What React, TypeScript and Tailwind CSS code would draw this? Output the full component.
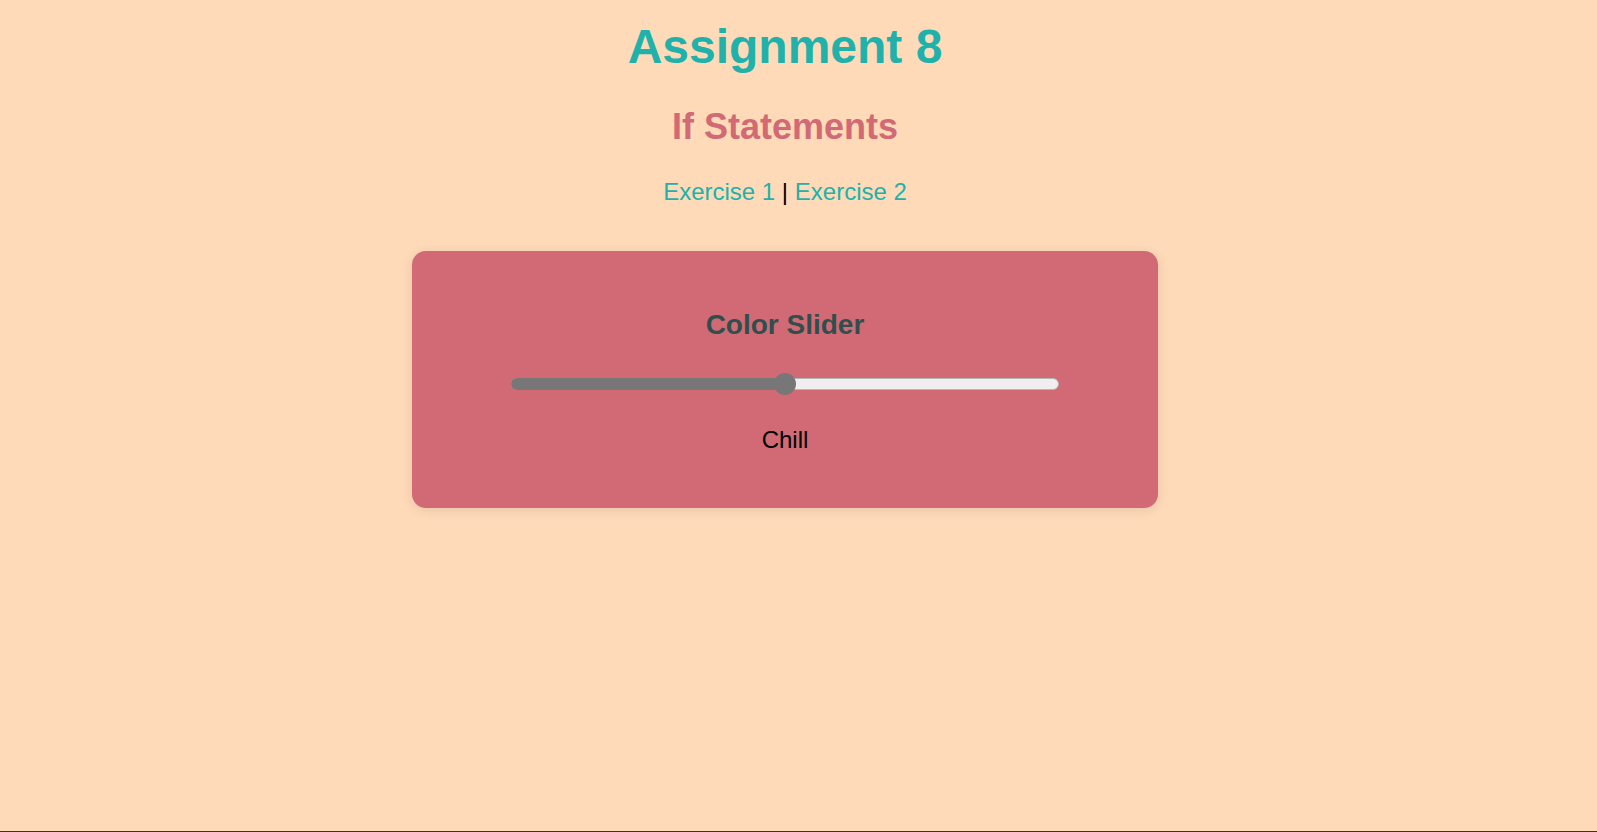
export default function App() {
  const value = 50;

  return (
    <div className="h-screen w-full bg-[#ffdab9] border-b border-[#333] font-['Liberation_Sans',Arial,sans-serif] pr-[27px]">
      <div className="flex flex-col items-center pt-[23px]">
        <h1 className="text-[48px] leading-[48px] font-bold text-[#20b2aa]">Assignment 8</h1>
        <h2 className="mt-[38px] text-[36px] leading-[36px] font-bold text-[#d16a74]">If Statements</h2>
        <nav className="mt-[35px] text-[24px] leading-[24px] text-black">
          <a className="text-[#20b2aa]">Exercise 1</a> | <a className="text-[#20b2aa]">Exercise 2</a>
        </nav>

        <div className="mt-[47px] w-[746px] rounded-[14px] bg-[#d16a74] pt-[60px] pb-[56px] shadow-[0_2px_12px_rgba(0,0,0,0.1)] flex flex-col items-center">
          <h3 className="text-[28px] leading-[28px] font-bold text-[#2f4f4f]">Color Slider</h3>

          <div className="relative mt-[34px] h-[22px] w-[548px] flex items-center">
            <div className="h-[12px] w-full rounded-full bg-[#efefef] border border-[#b5b5b5] relative">
              <div
                className="absolute -left-px -top-px h-[12px] rounded-l-full bg-[#777]"
                style={{ width: `calc(${value}% + 1px)` }}
              />
            </div>
            <div
              className="absolute top-0 h-[22px] w-[22px] -ml-[11px] rounded-full bg-[#777]"
              style={{ left: `${value}%` }}
            />
          </div>

          <p className="mt-[33px] text-[24px] leading-[24px] text-black">Chill</p>
        </div>
      </div>
    </div>
  );
}
